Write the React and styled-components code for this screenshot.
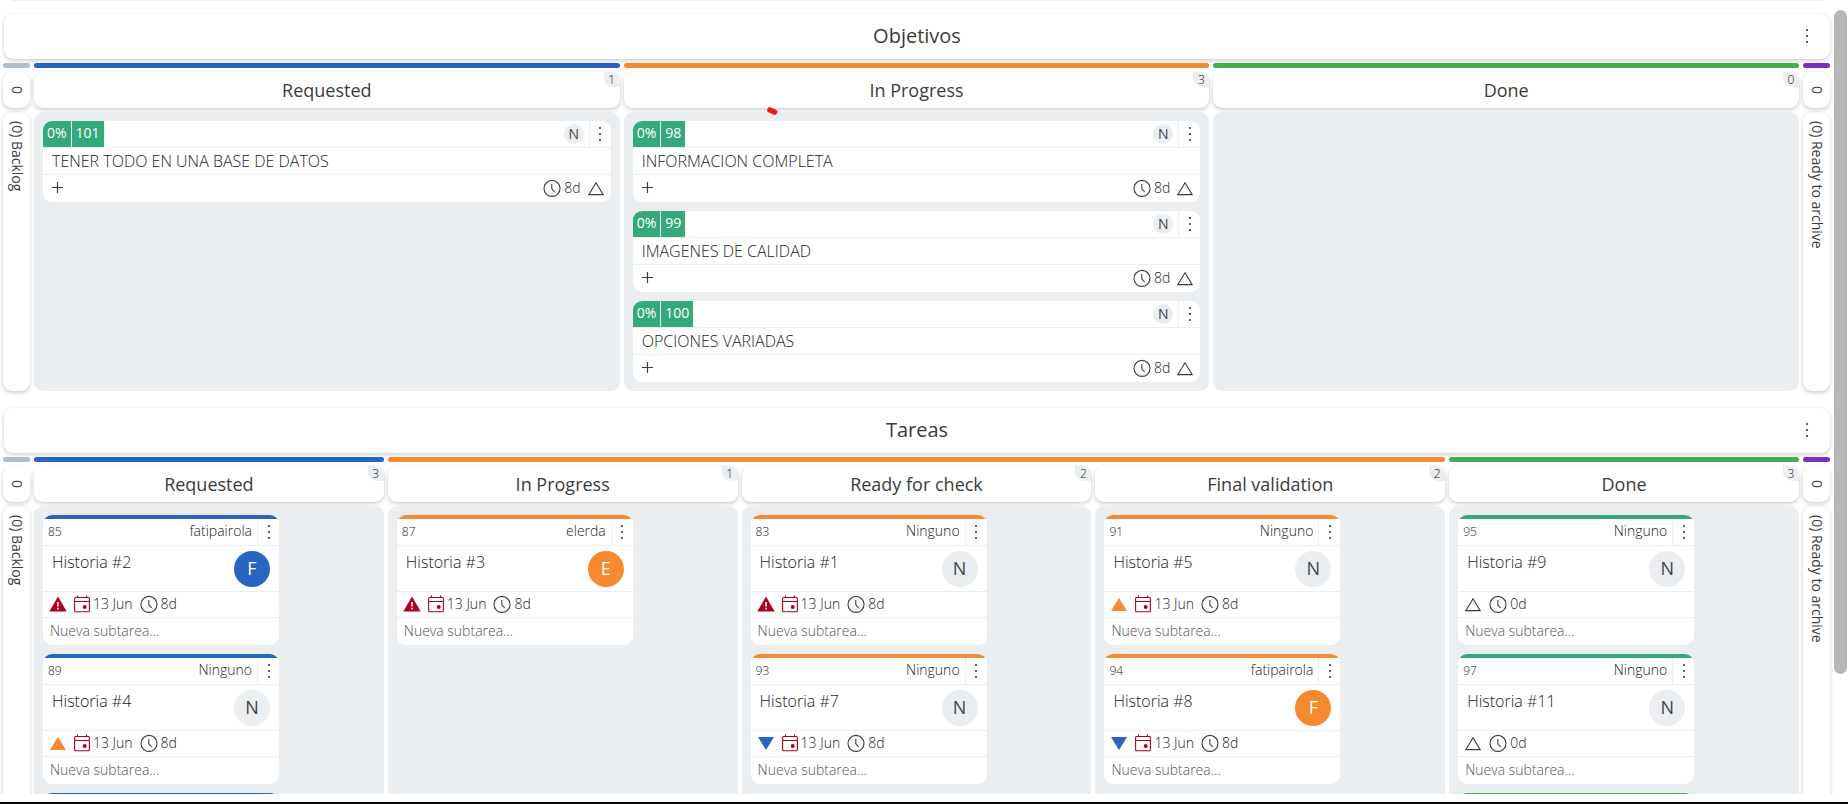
import React from "react";
import styled, { createGlobalStyle, css } from "styled-components";

const c = {
  text: "#222",
  heading: "#3b3b3b",
  muted: "#555",
  grey: "#eaeef1",
  blue: "#2665c0",
  orange: "#f58a30",
  green: "#42b04a",
  teal: "#34a97b",
  purple: "#7631bd",
  steel: "#b0bec5",
  red: "#b00020",
};

const Global = createGlobalStyle`
  *, *::before, *::after { box-sizing: border-box; }
  body {
    margin: 0;
    background: #fff;
    color: ${c.text};
    font-family: "Open Sans", "Noto Sans", sans-serif;
    font-size: 14px;
    font-weight: 300;
    line-height: 20px;
  }
  button { border: 0; padding: 0; background: none; color: inherit; font: inherit; cursor: pointer; }
  h1, h2, h3, p { margin: 0; font-weight: inherit; }
`;

const shadow = "0 2px 4px rgba(0, 0, 0, 0.18), 0 0 2px rgba(0, 0, 0, 0.06)";

const Page = styled.main`
  height: 100vh;
  display: flex;
  flex-direction: column;
  border-bottom: 2px solid #000;
  padding-bottom: 8px;
`;

const Viewport = styled.div`
  flex: 1;
  min-height: 0;
  display: flex;
  gap: 4px;
  overflow: hidden;
  padding-right: 1px;
`;

const Boards = styled.div`
  flex: 1;
  min-width: 0;
`;

const TopEdge = styled.div`
  height: 1px;
  margin: 0 8px 13px 12px;
  background: #ffebe0;
`;

const Track = styled.div`
  width: 13px;
  padding-top: 10px;
  display: flex;
  flex-direction: column;
`;

const Thumb = styled.div`
  flex: 83;
  border-radius: 7px;
  background: #b7b7b7;
`;

const TrackRest = styled.div`
  flex: 15;
`;

const Board = styled.section`
  margin-bottom: 17px;
`;

const TitleBar = styled.header`
  height: 45px;
  margin: 0 0 4px 4px;
  padding-bottom: 2px;
  display: grid;
  grid-template-columns: 1fr auto 1fr;
  align-items: center;
  border-radius: 9px;
  background: #fff;
  box-shadow: ${shadow};
`;

const BoardTitle = styled.h1`
  grid-column: 2;
  color: ${c.heading};
  font-size: 20px;
  line-height: 28px;
  font-weight: 400;
`;

const TitleMenu = styled.div`
  display: flex;
  justify-content: flex-end;
  padding-right: 12px;
`;

const Grid = styled.div`
  margin-left: 3px;
  display: grid;
  grid-template-columns: 27px repeat(${(p) => p.$columns}, minmax(0, 1fr)) 27px;
  gap: 4px;
`;

const Stripe = styled.div`
  grid-column: span ${(p) => p.$span || 1};
  height: 5px;
  border-radius: 3px;
  background: ${(p) => p.$color};
`;

const ColumnHeader = styled.div`
  position: relative;
  height: 36px;
  display: flex;
  align-items: center;
  justify-content: center;
  border-radius: 9px;
  background: #fff;
  box-shadow: ${shadow};
`;

const ColumnTitle = styled.h2`
  padding-bottom: 1px;
  color: ${c.heading};
  font-size: 18px;
  line-height: 24px;
  font-weight: 400;
`;

const Count = styled.span`
  position: absolute;
  top: 0;
  right: 0;
  width: 16px;
  height: 15px;
  border-radius: 0 9px 0 9px;
  background: ${c.grey};
  font-size: 12px;
  line-height: 15px;
  text-align: center;
`;

const ColumnBody = styled.div`
  position: relative;
  padding: 9px;
  display: flex;
  flex-direction: column;
  gap: 9px;
  border-radius: 9px;
  background: ${c.grey};
`;

const sideText = css`
  writing-mode: vertical-rl;
  padding-left: 2px;
  color: ${c.heading};
  font-weight: 400;
  line-height: 25px;
`;

const SideCount = styled.div`
  ${sideText}
  display: flex;
  justify-content: center;
  border-radius: 9px;
  box-shadow: ${shadow};
`;

const SideBody = styled.div`
  ${sideText}
  padding-top: 9px;
  border-radius: 9px;
  box-shadow: ${shadow};
`;

const Card = styled.article`
  flex: none;
  border-radius: 9px;
  background: #fff;
  overflow: hidden;
`;

const StoryShell = styled(Card)`
  width: 236px;
  min-height: 130px;
`;

const StoryStripe = styled.div`
  height: 4px;
  background: ${(p) => p.$color};
`;

const CardHead = styled.div`
  height: 27px;
  display: flex;
  align-items: center;
  border-bottom: 1px solid ${c.grey};
`;

const Tag = styled.span`
  align-self: stretch;
  padding: 0 4px;
  margin-right: 1px;
  background: ${c.teal};
  color: #fff;
  font-weight: 400;
  line-height: 24px;
`;

const Spacer = styled.div`
  flex: 1;
`;

const Avatar = styled.span`
  flex: none;
  width: ${(p) => p.$size}px;
  height: ${(p) => p.$size}px;
  border-radius: 50%;
  background: ${(p) => p.$color || c.grey};
  color: ${(p) => (p.$color ? "#fff" : "#444")};
  font-size: ${(p) => (p.$size > 30 ? 18 : 14)}px;
  line-height: ${(p) => p.$size - 1}px;
  font-weight: 400;
  text-align: center;
`;

const MenuButton = styled.button`
  width: 22px;
  height: 26px;
  display: flex;
  align-items: center;
  justify-content: center;
  border-left: ${(p) => (p.$divided ? `1px solid ${c.grey}` : "0")};
  margin-left: ${(p) => (p.$divided ? 5 : 0)}px;
`;

const GoalTitle = styled.h3`
  height: 27px;
  padding: 0 9px;
  border-bottom: 1px solid ${c.grey};
  font-size: 16px;
  line-height: 26px;
`;

const GoalFoot = styled.div`
  height: 27px;
  padding: 0 6px 2px 8px;
  display: flex;
  align-items: center;
  justify-content: space-between;
`;

const AddButton = styled.button`
  display: flex;
`;

const Meta = styled.div`
  display: flex;
  align-items: center;
  gap: ${(p) => (p.$wide ? 6 : 3)}px;
`;

const StoryId = styled.span`
  flex: 1;
  padding-left: 5px;
  font-size: 12px;
`;

const Owner = styled.span`
  padding-bottom: 2px;
`;

const StoryMain = styled.div`
  height: 46px;
  padding: 5px 9px;
  display: flex;
  justify-content: space-between;
  border-bottom: 1px solid ${c.grey};
`;

const StoryTitle = styled.h3`
  font-size: 16px;
  line-height: 22px;
`;

const StoryMeta = styled.div`
  height: 26px;
  padding: 0 0 2px 6px;
  display: flex;
  align-items: center;
  gap: 7px;
  border-bottom: 1px solid ${c.grey};
`;

const SubtaskInput = styled.input`
  display: block;
  width: 100%;
  height: 27px;
  padding: 0 7px 2px;
  border: 0;
  outline: 0;
  background: transparent;
  color: ${c.text};
  font: inherit;
  &::placeholder { color: ${c.muted}; opacity: 1; }
`;

const Mark = styled.svg`
  position: absolute;
  top: -6px;
  left: 142px;
`;

const Dots = () => (
  <svg width="4" height="16" viewBox="0 0 4 16" fill={c.heading} aria-hidden="true">
    <circle cx="2" cy="2" r="1.1" />
    <circle cx="2" cy="8" r="1.1" />
    <circle cx="2" cy="14" r="1.1" />
  </svg>
);

const Plus = () => (
  <svg width="13" height="13" viewBox="0 0 13 13" stroke={c.heading} strokeWidth="1.2" aria-hidden="true">
    <path d="M6.5 1v11M1 6.5h11" />
  </svg>
);

const Clock = () => (
  <svg width="18" height="18" viewBox="0 0 18 18" fill="none" stroke={c.heading} strokeWidth="1.1" aria-hidden="true">
    <circle cx="9" cy="9.4" r="8" />
    <path d="M8.8 5v4.8l2.8 3" />
  </svg>
);

const Calendar = () => (
  <svg width="16" height="18" viewBox="0 0 16 18" fill="none" stroke={c.red} aria-hidden="true">
    <rect x="0.6" y="2.5" width="14.8" height="14.3" rx="1" strokeWidth="1.1" />
    <path d="M0.5 6.5h15" strokeWidth="1.1" />
    <path d="M3.5 0.5v2M12.5 0.5v2" strokeWidth="1.2" />
    <circle cx="10.7" cy="12" r="2" fill={c.red} stroke="none" />
  </svg>
);

const Priority = ({ level }) => (
  <svg width="18" height="16" viewBox="0 0 18 16" aria-hidden="true">
    {level === "critical" && (
      <>
        <path d="M9 0.5 17.7 15.5H0.3Z" fill={c.red} />
        <path d="M9 6v4.5M9 11.8v1.6" stroke="#fff" strokeWidth="1.6" />
      </>
    )}
    {level === "high" && <path d="M9 2 17 15H1Z" fill={c.orange} />}
    {level === "low" && <path d="M1 2H17L9 15Z" fill={c.blue} />}
    {level === "normal" && <path d="M9 2.8 16.2 14.6H1.8Z" fill="none" stroke={c.heading} strokeWidth="1.1" />}
  </svg>
);

const Goal = ({ id, title }) => (
  <Card>
    <CardHead>
      <Tag>0%</Tag>
      <Tag>{id}</Tag>
      <Spacer />
      <Avatar $size={20}>N</Avatar>
      <MenuButton $divided aria-label={`Menu ${id}`}><Dots /></MenuButton>
    </CardHead>
    <GoalTitle>{title}</GoalTitle>
    <GoalFoot>
      <AddButton aria-label={`Add to ${id}`}><Plus /></AddButton>
      <Meta $wide>
        <Meta><Clock /><span>8d</span></Meta>
        <Priority level="normal" />
      </Meta>
    </GoalFoot>
  </Card>
);

const Story = ({ id, n, color, owner = "Ninguno", avatar, level, days = "8d" }) => (
  <StoryShell>
    <StoryStripe $color={color} />
    <CardHead>
      <StoryId>{id}</StoryId>
      <Owner>{owner}</Owner>
      <MenuButton $divided aria-label={`Menu ${id}`}><Dots /></MenuButton>
    </CardHead>
    <StoryMain>
      <StoryTitle>Historia #{n}</StoryTitle>
      <Avatar $size={36} $color={avatar}>{owner[0].toUpperCase()}</Avatar>
    </StoryMain>
    <StoryMeta>
      <Priority level={level} />
      {level !== "normal" && <Meta><Calendar /><span>13 Jun</span></Meta>}
      <Meta><Clock /><span>{days}</span></Meta>
    </StoryMeta>
    <SubtaskInput aria-label={`Nueva subtarea ${id}`} placeholder="Nueva subtarea..." />
  </StoryShell>
);

const PendingStory = ({ color }) => (
  <StoryShell>
    <StoryStripe $color={color} />
  </StoryShell>
);

const BoardView = ({ title, stripes, columns }) => (
  <Board>
    <TitleBar>
      <span />
      <BoardTitle>{title}</BoardTitle>
      <TitleMenu><MenuButton aria-label={`Menu ${title}`}><Dots /></MenuButton></TitleMenu>
    </TitleBar>
    <Grid $columns={columns.length}>
      <Stripe $color={c.steel} />
      {stripes.map(([color, span]) => <Stripe key={color} $color={color} $span={span} />)}
      <Stripe $color={c.purple} />
      <SideCount>0</SideCount>
      {columns.map((col) => (
        <ColumnHeader key={col.name}>
          <ColumnTitle>{col.name}</ColumnTitle>
          <Count>{col.count}</Count>
        </ColumnHeader>
      ))}
      <SideCount>0</SideCount>
      <SideBody>(0) Backlog</SideBody>
      {columns.map((col) => (
        <ColumnBody key={col.name}>
          {col.goals?.map((g) => <Goal key={g.id} {...g} />)}
          {col.stories?.map((s) => <Story key={s.id} {...s} />)}
          {col.pending && <PendingStory color={col.pending} />}
          {col.marked && (
            <Mark width="14" height="12" viewBox="0 0 14 12" aria-hidden="true">
              <path d="M4 4 8.6 6" stroke="#e81c1c" strokeWidth="5.6" strokeLinecap="round" />
            </Mark>
          )}
        </ColumnBody>
      ))}
      <SideBody>(0) Ready to archive</SideBody>
    </Grid>
  </Board>
);

const goalColumns = [
  { name: "Requested", count: 1, goals: [{ id: 101, title: "TENER TODO EN UNA BASE DE DATOS" }] },
  {
    name: "In Progress",
    count: 3,
    marked: true,
    goals: [
      { id: 98, title: "INFORMACION COMPLETA" },
      { id: 99, title: "IMAGENES DE CALIDAD" },
      { id: 100, title: "OPCIONES VARIADAS" },
    ],
  },
  { name: "Done", count: 0 },
];

const storyColumns = [
  {
    name: "Requested",
    count: 3,
    pending: c.blue,
    stories: [
      { id: 85, n: 2, color: c.blue, owner: "fatipairola", avatar: c.blue, level: "critical" },
      { id: 89, n: 4, color: c.blue, level: "high" },
    ],
  },
  { name: "In Progress", count: 1, stories: [{ id: 87, n: 3, color: c.orange, owner: "elerda", avatar: c.orange, level: "critical" }] },
  {
    name: "Ready for check",
    count: 2,
    stories: [
      { id: 83, n: 1, color: c.orange, level: "critical" },
      { id: 93, n: 7, color: c.orange, level: "low" },
    ],
  },
  {
    name: "Final validation",
    count: 2,
    stories: [
      { id: 91, n: 5, color: c.orange, level: "high" },
      { id: 94, n: 8, color: c.orange, owner: "fatipairola", avatar: c.orange, level: "low" },
    ],
  },
  {
    name: "Done",
    count: 3,
    pending: c.green,
    stories: [
      { id: 95, n: 9, color: c.teal, level: "normal", days: "0d" },
      { id: 97, n: 11, color: c.teal, level: "normal", days: "0d" },
    ],
  },
];

export default function App() {
  return (
    <>
      <Global />
      <Page>
        <Viewport>
          <Boards>
            <TopEdge />
            <BoardView title="Objetivos" stripes={[[c.blue, 1], [c.orange, 1], [c.green, 1]]} columns={goalColumns} />
            <BoardView title="Tareas" stripes={[[c.blue, 1], [c.orange, 3], [c.green, 1]]} columns={storyColumns} />
          </Boards>
          <Track><Thumb /><TrackRest /></Track>
        </Viewport>
      </Page>
    </>
  );
}
